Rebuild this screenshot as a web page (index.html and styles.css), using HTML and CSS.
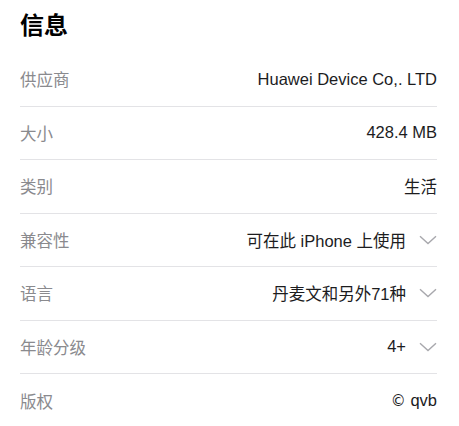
FILE: index.html
```html
<!DOCTYPE html>
<html lang="zh">
  <head>
    <meta charset="UTF-8" />
    <meta name="viewport" content="width=device-width, initial-scale=1.0" />
    <title>信息</title>
    <link rel="stylesheet" href="styles.css">
  </head>

  <body>
    <div class="info-section">
      <h1>信息</h1>

      <div class="info-row">
        <span class="info-label">供应商</span>
        <span class="info-value">Huawei Device Co,. LTD</span>
      </div>

      <div class="info-row">
        <span class="info-label">大小</span>
        <span class="info-value">428.4 MB</span>
      </div>

      <div class="info-row">
        <span class="info-label">类别</span>
        <span class="info-value">生活</span>
      </div>

      <div class="info-row">
        <span class="info-label">兼容性</span>
        <span class="info-value">可在此 iPhone 上使用</span>
        <svg class="chevron" viewBox="0 0 18 10"><path d="M1 1.2 L9 8.6 L17 1.2" /></svg>
      </div>

      <div class="info-row">
        <span class="info-label">语言</span>
        <span class="info-value">丹麦文和另外71种</span>
        <svg class="chevron" viewBox="0 0 18 10"><path d="M1 1.2 L9 8.6 L17 1.2" /></svg>
      </div>

      <div class="info-row">
        <span class="info-label">年龄分级</span>
        <span class="info-value">4+</span>
        <svg class="chevron" viewBox="0 0 18 10"><path d="M1 1.2 L9 8.6 L17 1.2" /></svg>
      </div>

      <div class="info-row last">
        <span class="info-label">版权</span>
        <span class="info-value"><span class="copy">©</span> qvb</span>
      </div>
    </div>
  </body>
</html>
```

FILE: styles.css
```css
body {
  margin: 0;
  background-color: #fff;
  font-family: "Liberation Sans", "Noto Sans CJK SC", sans-serif;
}

.info-section {
  padding: 0 22px 0 20px;
}

h1 {
  margin: 0;
  height: 53px;
  line-height: 52px;
  font-size: 24px;
  font-weight: bold;
  color: #000;
}

.info-row {
  display: flex;
  align-items: center;
  height: 53.5px;
  box-sizing: border-box;
  border-bottom: 1px solid #e3e3e6;
  font-size: 16.5px;
}

.info-row.last {
  border-bottom: none;
}

.info-label {
  color: #8a8a8e;
  flex: 1;
}

.info-value {
  color: #1c1c1e;
}

.copy {
  font-family: "DejaVu Sans", sans-serif;
  font-size: 15px;
}

.chevron {
  width: 18px;
  height: 10px;
  margin-left: 13px;
  fill: none;
  stroke: #a8a8ad;
  stroke-width: 1.4;
}
```
